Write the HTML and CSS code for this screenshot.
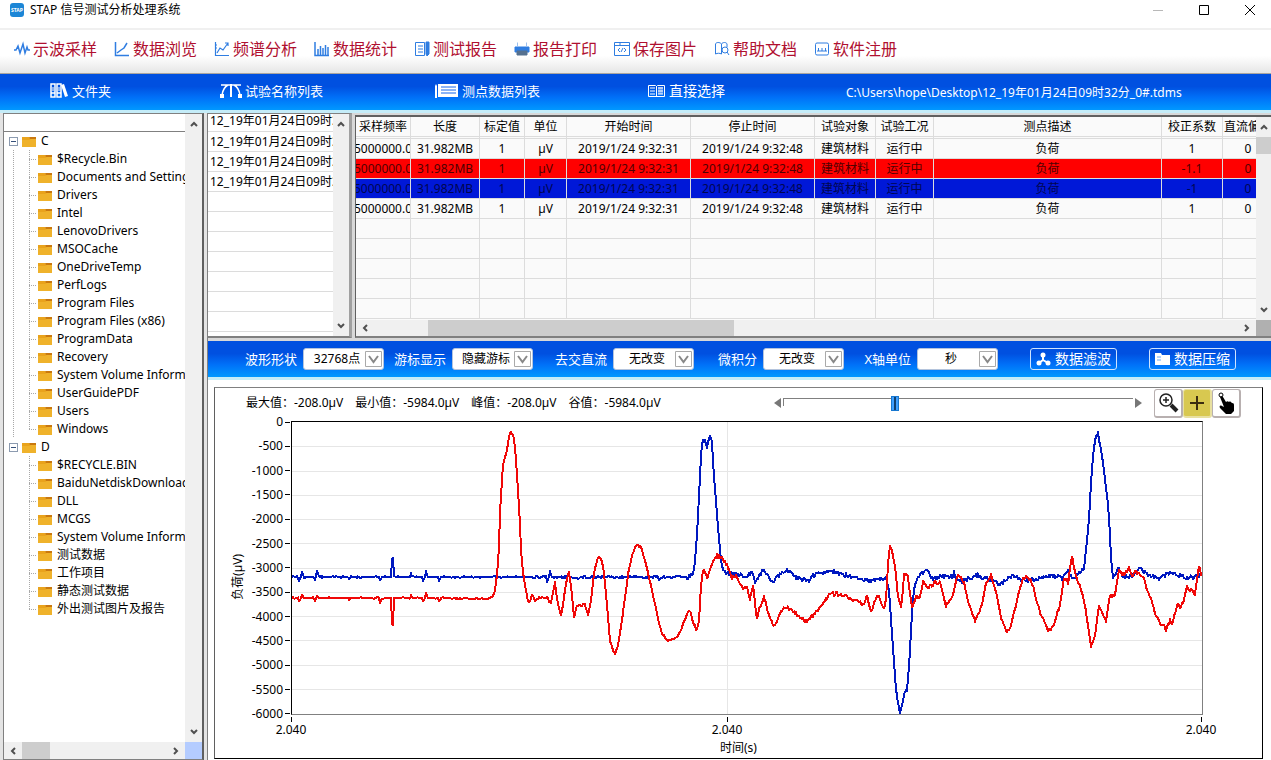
FILE: index.html
```
<!DOCTYPE html>
<html lang="zh-CN">
<head>
    <meta charset="UTF-8">
    <meta name="viewport" content="width=device-width, initial-scale=1.0">
    <title>STAP 信号测试分析处理系统</title>
    <link rel="stylesheet" href="styles.css">
</head>
<body>
    <svg class="defs" width="0" height="0">
        <symbol id="up" viewBox="0 0 8 6"><path d="M1 5l3-3 3 3" fill="none" stroke="#505050" stroke-width="2"/></symbol>
        <symbol id="down" viewBox="0 0 8 6"><path d="M1 1l3 3 3-3" fill="none" stroke="#505050" stroke-width="2"/></symbol>
        <symbol id="left" viewBox="0 0 6 8"><path d="M5 1L2 4l3 3" fill="none" stroke="#505050" stroke-width="2"/></symbol>
        <symbol id="right" viewBox="0 0 6 8"><path d="M1 1l3 3-3 3" fill="none" stroke="#505050" stroke-width="2"/></symbol>
        <symbol id="folder" viewBox="0 0 14 11"><path d="M0 1h7l1 1h6v9H0z" fill="#e9a31c"/><path d="M7 1h7v2H8z" fill="#c9780f"/><path d="M0 4h7l2-1h5v8H0z" fill="#efb22b"/></symbol>
    </svg>

    <!-- Title bar -->
    <header class="titlebar">
        <svg class="app-icon" width="14" height="14" viewBox="0 0 14 14"><rect width="14" height="14" rx="3" fill="#1c86d6"/><text x="7" y="9" font-size="5" font-weight="bold" fill="#fff" text-anchor="middle">STAP</text></svg>
        <h1>STAP 信号测试分析处理系统</h1>
        <div class="window-btns">
            <button aria-label="最小化"><svg width="12" height="12"><path d="M1 6.500h10" stroke="#b8b8b8"/></svg></button>
            <button aria-label="最大化"><svg width="12" height="12"><path d="M1.500 1.500h9v9h-9z" fill="none" stroke="#000"/></svg></button>
            <button aria-label="关闭"><svg width="12" height="12"><path d="M1 1l10 10M11 1L1 11" stroke="#000"/></svg></button>
        </div>
    </header>

    <!-- Main toolbar -->
    <nav class="toolbar">
        <button><svg width="16" height="16" viewBox="0 0 16 16"><path d="M0 9h2l2-4 2 7 3-9 2 9 2-6 1 3h2" stroke-width="1.500"/></svg>示波采样</button>
        <button><svg width="16" height="16" viewBox="0 0 16 16"><path d="M1.500 1v13.500H15M3 12l4-3 3-2 3-5" stroke-width="1.500"/></svg>数据浏览</button>
        <button><svg width="16" height="16" viewBox="0 0 16 16"><path d="M1.500 1v13.500H15M3 12l3-5 3 2 5-7M11 2h3v3M1 4h2M1 7h2" stroke-width="1.200"/></svg>频谱分析</button>
        <button><svg width="16" height="16" viewBox="0 0 16 16"><path d="M1 1v13.500h14" stroke-width="1.500"/><path d="M4 14V8M6.500 14V5M9 14V7M11.500 14V4M14 14V6" stroke-width="1.500"/></svg>数据统计</button>
        <button><svg width="16" height="16" viewBox="0 0 16 16"><path d="M1.500 1.500h9v13h-9zM4 5h5M4 8h5M4 11h5"/><path d="M12 1h3v12l-2 2-1-2z" fill="#2f7de1"/></svg>测试报告</button>
        <button><svg width="16" height="16" viewBox="0 0 16 16"><path d="M3.500 5V1.500M12.500 1.500V5" stroke="#9cc0ee"/><path d="M1 6h14v5H1z" fill="#2f7de1"/><path d="M3 10h10v4H3z" fill="#55708f" stroke="#55708f"/></svg>报告打印</button>
        <button><svg width="16" height="16" viewBox="0 0 16 16"><path d="M.5 1.500h15v13H.5zM.5 4.500h15M6 1v3M6 7L4 9l2 2M10 7l2 2-2 2M9 7l-2 4"/></svg>保存图片</button>
        <button><svg width="16" height="16" viewBox="0 0 16 16"><path d="M7.500 3C6 1 2 1 1.500 3v10c2-1 4-1 6 0V3c1-2 5-2 5.500 0v3M7.500 3v10"/><circle cx="11" cy="9" r="3"/><path d="M13 11l2 3"/></svg>帮助文档</button>
        <button><svg width="16" height="16" viewBox="0 0 16 16"><rect x="1.500" y="2" width="13" height="12" rx="1.500"/><path d="M3 10h10M4.500 10V7M8 10V7M11.500 10V7"/></svg>软件注册</button>
    </nav>

    <!-- Section headings -->
    <div class="sections">
        <h2><svg width="19" height="16" viewBox="0 0 19 16"><path d="M1 1h4v13H1zM7 1h4v13H7zM1 10h4M7 10h4" fill="none" stroke="#fff" stroke-width="1.500"/><path d="M3 4v4M9 4v4" stroke="#fff"/><path d="M11 2l3-1 4 12-3 1z" fill="#fff"/></svg>文件夹</h2>
        <h2><svg width="22" height="16" viewBox="0 0 22 16"><path d="M2 12C3 6 6 3 8 2h6c2 1 5 4 6 10M1 2h20M11 2v12" fill="none" stroke="#fff" stroke-width="1.500"/><path d="M10 1h2v13h-2zM0 11h4v4H0zM18 11h4v4h-4z" fill="#fff"/></svg>试验名称列表</h2>
        <h2 class="wide"><svg width="23" height="14" viewBox="0 0 23 14"><path d="M0 2l1-2 1 2v12H0zM3 0h20v13H3z" fill="#fff"/><path d="M6 3h15M6 6h15M6 9h15" stroke="#1767ee"/></svg>测点数据列表</h2>
        <h2 class="wide large"><svg width="17" height="14" viewBox="0 0 17 14"><path d="M.5 1.500h7l1 1 1-1h7v11H.5zM8.500 2v10M2 4h5M2 7h5M2 10h5M10 4h5M10 7h5M10 10h5" fill="none" stroke="#fff"/><path d="M10 3h5v7h-5z" fill="#fff" opacity=".4"/></svg>直接选择</h2>
        <p>C:\Users\hope\Desktop\12_19年01月24日09时32分_0#.tdms</p>
    </div>

    <main class="workspace">
        <!-- Folder tree -->
        <aside class="tree-pane">
            <div class="tree-view">
                <div class="tree-head"></div>
                <ul class="tree">
                    <li>
                        <div class="drive"><button aria-label="折叠 C"></button><svg width="14" height="11"><use href="#folder"/></svg>C</div>
                        <ul class="folders linked">
                            <li><svg width="14" height="11"><use href="#folder"/></svg>$Recycle.Bin</li>
                            <li><svg width="14" height="11"><use href="#folder"/></svg>Documents and Settings</li>
                            <li><svg width="14" height="11"><use href="#folder"/></svg>Drivers</li>
                            <li><svg width="14" height="11"><use href="#folder"/></svg>Intel</li>
                            <li><svg width="14" height="11"><use href="#folder"/></svg>LenovoDrivers</li>
                            <li><svg width="14" height="11"><use href="#folder"/></svg>MSOCache</li>
                            <li><svg width="14" height="11"><use href="#folder"/></svg>OneDriveTemp</li>
                            <li><svg width="14" height="11"><use href="#folder"/></svg>PerfLogs</li>
                            <li><svg width="14" height="11"><use href="#folder"/></svg>Program Files</li>
                            <li><svg width="14" height="11"><use href="#folder"/></svg>Program Files (x86)</li>
                            <li><svg width="14" height="11"><use href="#folder"/></svg>ProgramData</li>
                            <li><svg width="14" height="11"><use href="#folder"/></svg>Recovery</li>
                            <li><svg width="14" height="11"><use href="#folder"/></svg>System Volume Information</li>
                            <li><svg width="14" height="11"><use href="#folder"/></svg>UserGuidePDF</li>
                            <li><svg width="14" height="11"><use href="#folder"/></svg>Users</li>
                            <li><svg width="14" height="11"><use href="#folder"/></svg>Windows</li>
                        </ul>
                    </li>
                    <li>
                        <div class="drive"><button aria-label="折叠 D"></button><svg width="14" height="11"><use href="#folder"/></svg>D</div>
                        <ul class="folders">
                            <li><svg width="14" height="11"><use href="#folder"/></svg>$RECYCLE.BIN</li>
                            <li><svg width="14" height="11"><use href="#folder"/></svg>BaiduNetdiskDownload</li>
                            <li><svg width="14" height="11"><use href="#folder"/></svg>DLL</li>
                            <li><svg width="14" height="11"><use href="#folder"/></svg>MCGS</li>
                            <li><svg width="14" height="11"><use href="#folder"/></svg>System Volume Information</li>
                            <li><svg width="14" height="11"><use href="#folder"/></svg>测试数据</li>
                            <li><svg width="14" height="11"><use href="#folder"/></svg>工作项目</li>
                            <li><svg width="14" height="11"><use href="#folder"/></svg>静态测试数据</li>
                            <li><svg width="14" height="11"><use href="#folder"/></svg>外出测试图片及报告</li>
                        </ul>
                    </li>
                </ul>
            </div>
            <div class="vscroll">
                <button aria-label="向上"><svg width="8" height="6"><use href="#up"/></svg></button>
                <button aria-label="向下"><svg width="8" height="6"><use href="#down"/></svg></button>
            </div>
            <div class="hscroll">
                <button aria-label="向左"><svg width="6" height="8"><use href="#left"/></svg></button>
                <span class="thumb"></span>
                <button aria-label="向右"><svg width="6" height="8"><use href="#right"/></svg></button>
            </div>
            <div class="corner"></div>
        </aside>

        <div class="content">
            <div class="data-row">
                <!-- Test names -->
                <section class="list-pane">
                    <ul class="tests">
                        <li>12_19年01月24日09时32分</li>
                        <li>12_19年01月24日09时32分</li>
                        <li>12_19年01月24日09时32分</li>
                        <li>12_19年01月24日09时32分</li>
                        <li></li><li></li><li></li><li></li><li></li><li></li><li></li>
                    </ul>
                    <div class="vscroll">
                        <button aria-label="向上"><svg width="8" height="6"><use href="#up"/></svg></button>
                        <button aria-label="向下"><svg width="8" height="6"><use href="#down"/></svg></button>
                    </div>
                </section>

                <!-- Measuring points -->
                <section class="table-pane">
                    <div class="table-view">
                        <table>
                            <colgroup><col class="c-rate"><col class="c-len"><col class="c-cal"><col class="c-unit"><col class="c-time"><col class="c-time"><col class="c-obj"><col class="c-state"><col><col class="c-obj"><col class="c-dc"></colgroup>
                            <thead>
                                <tr><th>采样频率</th><th>长度</th><th>标定值</th><th>单位</th><th>开始时间</th><th>停止时间</th><th>试验对象</th><th>试验工况</th><th>测点描述</th><th>校正系数</th><th><div>直流偏置</div></th></tr>
                            </thead>
                            <tbody>
                                <tr><td><div>5000000.0</div></td><td>31.982MB</td><td>1</td><td>µV</td><td>2019/1/24 9:32:31</td><td>2019/1/24 9:32:48</td><td>建筑材料</td><td>运行中</td><td>负荷</td><td>1</td><td><div>0</div></td></tr>
                                <tr class="red"><td><div>5000000.0</div></td><td>31.982MB</td><td>1</td><td>µV</td><td>2019/1/24 9:32:31</td><td>2019/1/24 9:32:48</td><td>建筑材料</td><td>运行中</td><td>负荷</td><td>-1.1</td><td><div>0</div></td></tr>
                                <tr class="blue"><td><div>5000000.0</div></td><td>31.982MB</td><td>1</td><td>µV</td><td>2019/1/24 9:32:31</td><td>2019/1/24 9:32:48</td><td>建筑材料</td><td>运行中</td><td>负荷</td><td>-1</td><td><div>0</div></td></tr>
                                <tr><td><div>5000000.0</div></td><td>31.982MB</td><td>1</td><td>µV</td><td>2019/1/24 9:32:31</td><td>2019/1/24 9:32:48</td><td>建筑材料</td><td>运行中</td><td>负荷</td><td>1</td><td><div>0</div></td></tr>
                                <tr><td></td><td></td><td></td><td></td><td></td><td></td><td></td><td></td><td></td><td></td><td></td></tr>
                                <tr><td></td><td></td><td></td><td></td><td></td><td></td><td></td><td></td><td></td><td></td><td></td></tr>
                                <tr><td></td><td></td><td></td><td></td><td></td><td></td><td></td><td></td><td></td><td></td><td></td></tr>
                                <tr><td></td><td></td><td></td><td></td><td></td><td></td><td></td><td></td><td></td><td></td><td></td></tr>
                                <tr><td></td><td></td><td></td><td></td><td></td><td></td><td></td><td></td><td></td><td></td><td></td></tr>
                            </tbody>
                        </table>
                    </div>
                    <div class="vscroll">
                        <button aria-label="向上"><svg width="8" height="6"><use href="#up"/></svg></button>
                        <span class="thumb"></span>
                        <button aria-label="向下"><svg width="8" height="6"><use href="#down"/></svg></button>
                    </div>
                    <div class="hscroll">
                        <button aria-label="向左"><svg width="6" height="8"><use href="#left"/></svg></button>
                        <span class="thumb"></span>
                        <button aria-label="向右"><svg width="6" height="8"><use href="#right"/></svg></button>
                    </div>
                    <div class="corner"></div>
                </section>
            </div>

            <!-- Wave options -->
            <form class="options">
                <label>波形形状<select><option>32768点</option></select></label>
                <label>游标显示<select><option>隐藏游标</option></select></label>
                <label>去交直流<select><option>无改变</option></select></label>
                <label>微积分<select><option>无改变</option></select></label>
                <label>X轴单位<select><option>秒</option></select></label>
                <button type="button"><svg width="15" height="14" viewBox="0 0 15 14"><path d="M7 3v5L3 11M7 8l5 3" fill="none" stroke="#fff" stroke-width="2"/><circle cx="7" cy="3" r="2.500" fill="#fff"/><circle cx="3" cy="11" r="2.500" fill="#fff"/><circle cx="12" cy="11" r="2.500" fill="#fff"/></svg>数据滤波</button>
                <button type="button"><svg width="15" height="14" viewBox="0 0 15 14"><path d="M0 1h6l1 2h8v10H0z" fill="#fff"/><path d="M2 5h4M2 8h4" stroke="#6aa8f7"/></svg>数据压缩</button>
            </form>

            <!-- Chart -->
            <section class="chart">
                <div class="chart-head">
                    <ul class="stats">
                        <li>最大值：-208.0µV</li>
                        <li>最小值：-5984.0µV</li>
                        <li>峰值：-208.0µV</li>
                        <li>谷值：-5984.0µV</li>
                    </ul>
                    <div class="slider">
                        <button aria-label="后退"><svg width="7" height="10"><path d="M7 0v10L0 5z" fill="#777"/></svg></button>
                        <input type="range" min="0" max="1000" value="316" aria-label="位置">
                        <button aria-label="前进"><svg width="7" height="10"><path d="M0 0v10l7-5z" fill="#777"/></svg></button>
                    </div>
                    <div class="tools">
                        <button aria-label="缩放"><svg width="22" height="22" viewBox="0 0 22 22"><circle cx="9" cy="8" r="6" fill="none" stroke="#222" stroke-width="1.500"/><path d="M6 8h6M9 5v6" stroke="#222" stroke-width="1.500"/><path d="M14 13l6 6" stroke="#222" stroke-width="4"/></svg></button>
                        <button class="active" aria-label="游标"><svg width="16" height="16"><path d="M1 8h14M8 1v14" stroke="#3a2c10" stroke-width="2"/></svg></button>
                        <button aria-label="拖动"><svg width="22" height="24" viewBox="0 0 22 24"><circle cx="6" cy="4" r="2" fill="none" stroke="#000"/><path d="M5 6c1-1 2-1 3 0l3 5c1-1 2-1 3 0 1-1 2 0 3 1 2 0 2 1 2 3v5l-3 3h-5l-6-6c-1-2 0-3 2-2l2 1-4-10z"/></svg></button>
                    </div>
                </div>
                <div class="plot-area">
                    <div class="y-title"><span>负荷(µV)</span></div>
                    <ul class="y-axis">
                        <li>0</li><li>-500</li><li>-1000</li><li>-1500</li><li>-2000</li><li>-2500</li><li>-3000</li><li>-3500</li><li>-4000</li><li>-4500</li><li>-5000</li><li>-5500</li><li>-6000</li>
                    </ul>
                    <svg class="plot" viewBox="292 422 910 292" preserveAspectRatio="none">
                        <path id="grid" class="grid"/>
                        <path id="blue" class="wave-blue"/>
                        <path id="red" class="wave-red"/>
                    </svg>
                    <ul class="x-axis"><li>2.040</li><li>2.040</li><li>2.040</li></ul>
                </div>
                <div class="x-title">时间(s)</div>
            </section>
        </div>
    </main>
    <script src="chart.js"></script>
</body>
</html>
```
FILE: styles.css
```
* {
    box-sizing: border-box;
}
body {
    margin: 0;
    min-height: 100vh;
    display: flex;
    flex-direction: column;
    background: #fff;
    color: #000;
    font-family: "Noto Sans", "Noto Sans CJK SC", sans-serif;
    font-size: 12px;
    line-height: 18px;
}
ul {
    list-style: none;
    margin: 0;
    padding: 0;
}
h1, h2, p {
    margin: 0;
    font-weight: normal;
}
button, select {
    font-family: inherit;
    font-size: inherit;
    line-height: inherit;
}
button {
    display: flex;
    align-items: center;
    justify-content: center;
    padding: 0;
    border: none;
    background: none;
    cursor: pointer;
}
svg {
    flex: none;
}
.defs {
    position: absolute;
}

/* title bar */
.titlebar {
    display: flex;
    align-items: center;
    height: 30px;
    padding: 0 0 8px 10px;
    border-bottom: 2px solid #f0f0f0;
}
.titlebar h1 {
    flex: 1;
    margin-left: 6px;
    font-size: 12px;
}
.window-btns {
    display: flex;
    gap: 4px;
}
.window-btns button {
    width: 42px;
    height: 20px;
}

/* toolbar */
.toolbar {
    display: flex;
    height: 44px;
    padding: 0 14px 5px;
    background: linear-gradient(#fff 60%, #e6e6e6);
    border-bottom: 1px solid #a9a5a0;
}
.toolbar button {
    width: 100px;
    justify-content: flex-start;
    gap: 3px;
    font-size: 16px;
    color: #b01030;
    white-space: nowrap;
}
.toolbar svg {
    fill: none;
    stroke: #2f7de1;
}

/* blue bars */
.sections, .options {
    display: grid;
    align-items: center;
    background: linear-gradient(#0050e0 35%, #0070f8 65%, #0098ff);
    color: #fff;
}
.sections {
    grid-template-columns: 170fr 215fr 213fr 198fr 425fr;
    height: 39px;
    padding: 0 0 2px 50px;
    border-bottom: 3px solid #c4ecf8;
}
.sections h2 {
    display: flex;
    align-items: center;
    gap: 3px;
    font-size: 13px;
}
.sections .wide {
    gap: 4px;
}
.sections .large {
    font-size: 14px;
}
.sections p {
    padding-top: 4px;
}
.options {
    grid-template-columns: 176fr 149fr 161fr 150fr 154fr 119fr 119fr;
    justify-items: end;
    height: 39px;
    padding-right: 35px;
    border-bottom: 3px solid #c4ecf8;
}
.options label {
    display: flex;
    align-items: center;
    gap: 6px;
    font-size: 13px;
}
.options select {
    appearance: none;
    width: 81px;
    height: 22px;
    padding: 0 17px 0 4px;
    border: 1px solid #b4c4dc;
    border-radius: 3px;
    background: #fff url("data:image/svg+xml,%3Csvg xmlns='http://www.w3.org/2000/svg' width='17' height='16'%3E%3Cpath d='M.5 .5h16v15H.5z' fill='%23fff' stroke='%23aaa'/%3E%3Cpath d='M4 5l4.500 6L13 5' fill='none' stroke='%23888' stroke-width='2'/%3E%3C/svg%3E") no-repeat right 1px center;
    color: #000;
    font-size: 12px;
    text-align-last: center;
}
.options button {
    width: 87px;
    height: 22px;
    gap: 4px;
    border: 1px solid #cfe4ff;
    border-radius: 3px;
    color: #fff;
    font-size: 14px;
}

/* scroll bars */
.vscroll, .hscroll {
    display: flex;
    justify-content: space-between;
    background: #f0f0f0;
}
.vscroll {
    flex-direction: column;
}
.vscroll button {
    height: 20px;
}
.hscroll button {
    width: 18px;
}
.thumb {
    background: #cdcdcd;
}

/* folder tree */
.workspace {
    flex: 1;
    display: flex;
    background: #e4e4e4;
}
.tree-pane {
    display: grid;
    grid-template-columns: 1fr 17px;
    grid-template-rows: 1fr 17px;
    width: 201px;
    margin: 0 3px 1px 3px;
    background: #fff;
    border: 1px solid #808080;
    border-right: 2px solid #606060;
    border-bottom: 2px solid #808080;
}
.tree-view {
    overflow: hidden;
    white-space: nowrap;
}
.tree-head {
    height: 18px;
    border-bottom: 1px solid #808080;
}
.drive, .folders li {
    display: flex;
    align-items: center;
    gap: 5px;
    height: 18px;
}
.drive {
    padding-left: 5px;
}
.drive button {
    width: 9px;
    height: 9px;
    margin-right: -1px;
    border: 1px solid #8c9bb0;
    background: linear-gradient(#35507a, #35507a) center / 5px 1px no-repeat;
}
.folders li {
    padding-left: 34px;
    background:
        repeating-linear-gradient(#a8a8a8 0 1px, transparent 1px 2px) 25px 0 / 1px 18px no-repeat,
        repeating-linear-gradient(90deg, #a8a8a8 0 1px, transparent 1px 2px) 25px 9px / 8px 1px no-repeat;
}
.folders li:last-child {
    background-size: 1px 9px, 8px 1px;
}
.linked {
    background: repeating-linear-gradient(#a8a8a8 0 1px, transparent 1px 2px) 9px 0 / 1px 100% no-repeat;
}
.tree-pane .hscroll .thumb {
    width: 28px;
    margin-right: auto;
}
.tree-pane .corner {
    background: #b4ccff;
}

/* right side */
.content {
    flex: 1;
    min-width: 0;
    display: flex;
    flex-direction: column;
    border-left: 1px solid #808080;
    background: #fff;
}
.data-row {
    display: flex;
    height: 228px;
    gap: 3px;
    padding-bottom: 3px;
    background: #d8d8d8;
}
.list-pane {
    display: flex;
    width: 144px;
    background: #fff;
    border-top: 1px solid #808080;
    border-right: 3px solid #a0a0a0;
    border-bottom: 2px solid #808080;
}
.tests {
    flex: 1;
    overflow: hidden;
    white-space: nowrap;
}
.tests li {
    height: 20px;
    padding-left: 2px;
    line-height: 19px;
    border-bottom: 1px solid #dcdcdc;
}
.tests li:first-child {
    height: 18px;
    line-height: 14px;
}
.list-pane .vscroll {
    width: 16px;
}
.table-pane {
    flex: 1;
    min-width: 0;
    display: grid;
    grid-template-columns: 1fr 15px;
    grid-template-rows: 1fr 16px;
    margin-top: 2px;
    background: #fafafa;
    border-top: 2px solid #606060;
    border-left: 1px solid #606060;
    border-bottom: 2px solid #808080;
}
.table-view {
    overflow: hidden;
}
table {
    width: 100%;
    table-layout: fixed;
    border-collapse: separate;
    border-spacing: 0;
    white-space: nowrap;
    text-align: center;
}
th, td {
    height: 20px;
    padding: 0;
    overflow: hidden;
    border-right: 1px solid #dcdcdc;
    border-bottom: 1px solid #dcdcdc;
    font-weight: normal;
    line-height: 18px;
}
th {
    height: 22px;
    border-bottom: 3px double #dcdcdc;
}
td:last-child, th:last-child {
    border-right: none;
}
td:first-child div {
    display: flex;
    justify-content: center;
}
td:last-child div, th:last-child div {
    width: 50px;
}
.c-rate { width: 55px; }
.c-len { width: 69px; }
.c-cal { width: 45px; }
.c-unit { width: 42px; }
.c-time { width: 124px; }
.c-obj { width: 61px; }
.c-state { width: 58px; }
.c-dc { width: 33px; }
.red td {
    background: #ff0000;
    color: #500000;
}
.blue td {
    background: #0018d8;
    color: #000650;
}
.table-pane .vscroll .thumb {
    height: 17px;
    margin-bottom: auto;
}
.table-pane .hscroll .thumb {
    width: 34%;
    margin: 0 auto 0 6%;
}
.table-pane .corner {
    background: #b0b0b0;
}

/* chart */
.chart {
    flex: 1;
    display: flex;
    flex-direction: column;
    margin: 7px 8px 3px 6px;
    border: 1px solid #000;
    border-top-color: #808080;
    border-left-color: #606060;
}
.chart-head {
    display: flex;
    align-items: center;
    height: 33px;
    padding: 0 21px 3px 31px;
}
.stats {
    display: flex;
    gap: 12px;
    white-space: nowrap;
}
.slider {
    display: flex;
    align-items: center;
    gap: 2px;
    margin-left: auto;
    margin-right: 12px;
}
.slider input {
    appearance: none;
    width: 350px;
    height: 16px;
    margin: 0;
    background: linear-gradient(#808080, #808080) 0 3px / 100% 1px no-repeat, linear-gradient(#808080, #808080) 0 3px / 1px 8px no-repeat;
}
.slider input::-webkit-slider-thumb {
    appearance: none;
    width: 8px;
    height: 15px;
    border: 1px solid #1878d0;
    background: linear-gradient(90deg, #40a0ff 2px, #104070 2px 4px, #40a0ff 4px);
}
.tools {
    display: flex;
}
.tools button {
    width: 29px;
    height: 29px;
    border: 1px solid #b8b0b0;
    border-right-width: 2px;
    border-bottom-width: 2px;
    border-radius: 3px;
    background: #fff;
}
.tools .active {
    background: #d8c850;
    border-color: #e8e0a0;
}
.plot-area {
    flex: 1;
    display: grid;
    grid-template-columns: 30px 46px 1fr;
    grid-template-rows: 1fr 23px;
    padding-right: 59px;
}
.y-title {
    display: flex;
    align-items: center;
    justify-content: center;
    padding: 18px 0 0 16px;
}
.y-title span {
    writing-mode: vertical-rl;
    text-orientation: sideways;
    transform: rotate(180deg);
}
.y-axis {
    display: flex;
    flex-direction: column;
    justify-content: space-between;
    margin: -6px 0;
}
.y-axis li {
    display: flex;
    align-items: center;
    justify-content: flex-end;
    gap: 2px;
    line-height: 14px;
}
.y-axis li::after {
    content: "";
    width: 5px;
    height: 1px;
    margin-right: 1px;
    background: #000;
}
.plot {
    width: 100%;
    height: 100%;
    min-height: 0;
    border: 1px solid #000;
    border-right-color: #808080;
    border-bottom-color: #808080;
}
.plot path {
    fill: none;
    stroke-width: 2;
    stroke-linejoin: round;
    vector-effect: non-scaling-stroke;
    shape-rendering: crispEdges;
}
.plot .grid {
    stroke: #e6e6e6;
    stroke-width: 1;
}
.wave-blue {
    stroke: #0018c0;
}
.wave-red {
    stroke: #f00808;
}
.x-axis {
    grid-column: 3;
    display: grid;
    grid-template-columns: 436fr 474fr 0;
    padding-right: 2px;
}
.x-axis li {
    display: flex;
    flex-direction: column;
    align-items: center;
    width: 0;
    line-height: 16px;
}
.x-axis li::before {
    content: "";
    width: 1px;
    height: 5px;
    margin-top: 2px;
    background: #000;
}
.x-title {
    text-align: center;
    line-height: 20px;
}
```
FILE: chart.js
```
// sampled points of both channels as "x y" pairs
const blue = '292 577 298 577 299 581 301 577 302 571 304 577 314 577 315 580 317 571 319 577 348 577 349 579 351 577 379 577 380 580 382 577 391 577 392 558 393 558 394 577 410 577 411 574 412 577 422 577 423 581 425 577 426 571 428 577 438 577 439 581 441 577 546 577 547 582 549 577 550 571 552 577 567 577 568 574 570 577 577 577 578 580 580 577 658 577 659 580 661 577 686 577 687 580 689 576 692 575 694 570 695 560 697 535 699 495 701 455 702 442 703 439 705 441 707 446 710 436 712 440 713 460 715 490 717 515 719 540 721 560 723 570 728 573 737 574 747 577 752 571 755 582 763 570 773 582 779 575 787 570 796 577 809 581 813 576 831 571 852 577 870 581 886 578 889 590 891 618 893 648 896 690 900 712 904 695 907 690 909 667 911 630 913 600 915 585 918 577 921 573 928 571 933 579 943 576 953 576 954 569 955 576 962 582 977 575 989 580 1000 584 1011 576 1028 581 1045 578 1059 575 1062 580 1067 571 1074 579 1079 574 1084 568 1086 550 1089 520 1091 485 1093 455 1096 436 1098 433 1101 450 1104 470 1108 505 1110 535 1111 558 1113 577 1119 568 1123 577 1130 577 1141 568 1147 575 1159 579 1169 573 1187 578 1202 575';
const red = '292 598 298 598 299 602 301 598 302 594 304 598 314 598 315 602 317 596 319 598 348 598 349 600 351 598 379 598 380 603 382 598 391 598 392 625 393 625 394 598 410 598 411 595 412 598 422 598 423 602 425 598 426 593 428 598 438 598 439 602 441 598 488 599 493 596 495 590 497 575 499 548 500 512 502 480 503 465 507 450 509 436 511 432 514 438 516 460 518 490 520 525 521 550 523 572 525 585 528 602 530 602 532 595 535 600 540 597 547 598 551 603 555 583 557 600 561 616 563 605 566 583 569 572 571 585 574 617 577 605 582 605 585 605 588 614 591 600 594 573 597 561 599 556 602 562 604 573 607 606 610 640 613 650 615 653 618 645 622 620 625 597 628 575 632 555 635 548 638 545 642 549 647 569 652 590 656 608 659 624 663 635 668 640 675 639 680 632 687 614 690 610 693 622 697 630 699 620 701 588 703 571 705 572 707 579 711 565 714 562 717 555 723 560 728 567 732 577 737 576 742 588 747 589 750 599 753 585 755 602 757 620 759 610 764 597 769 615 773 625 777 623 781 611 787 607 796 614 806 621 813 616 821 605 830 594 842 594 855 601 864 605 867 597 871 613 876 598 879 596 884 609 886 600 888 565 890 547 892 550 895 567 898 595 901 607 903 590 904 572 908 577 912 609 916 597 920 598 923 582 928 588 935 583 940 583 946 605 952 598 958 575 964 582 969 605 975 620 981 608 986 583 991 575 996 590 1001 618 1007 633 1011 625 1018 597 1023 578 1027 575 1032 583 1040 612 1048 630 1053 628 1060 605 1064 578 1068 582 1072 557 1076 577 1082 592 1086 612 1091 647 1095 637 1099 605 1106 620 1110 596 1115 595 1119 572 1123 575 1129 568 1132 577 1135 571 1143 577 1150 597 1155 613 1159 622 1163 624 1166 631 1170 620 1172 624 1178 603 1181 608 1187 588 1195 594 1199 566 1202 577';

// steps one unit at a time between samples and adds the measuring noise
function wave(data, seed) {
    const n = data.split(' ').map(Number);
    let d = 'M292 ' + n[1];
    for (let i = 0; i < n.length - 2; i += 2) {
        const x1 = n[i], y1 = n[i + 1], x2 = n[i + 2], y2 = n[i + 3];
        for (let x = x1 + 1; x <= x2; x++) {
            const y = y1 + (y2 - y1) * (x - x1) / (x2 - x1);
            seed = (seed * 16807) % 2147483647;
            const amp = x < 530 ? 0.7 : x < 690 ? 1.2 : 2;
            d += 'L' + x + ' ' + (y + (seed / 2147483647 - 0.5) * 2 * amp).toFixed(1);
        }
    }
    return d;
}

let grid = 'M727.5 422V714';
for (let i = 1; i < 12; i++) {
    grid += 'M292 ' + (Math.round(422 + i * 24.25) + 0.5) + 'H1202';
}
document.getElementById('grid').setAttribute('d', grid);
document.getElementById('blue').setAttribute('d', wave(blue, 77));
document.getElementById('red').setAttribute('d', wave(red, 4211));
```
